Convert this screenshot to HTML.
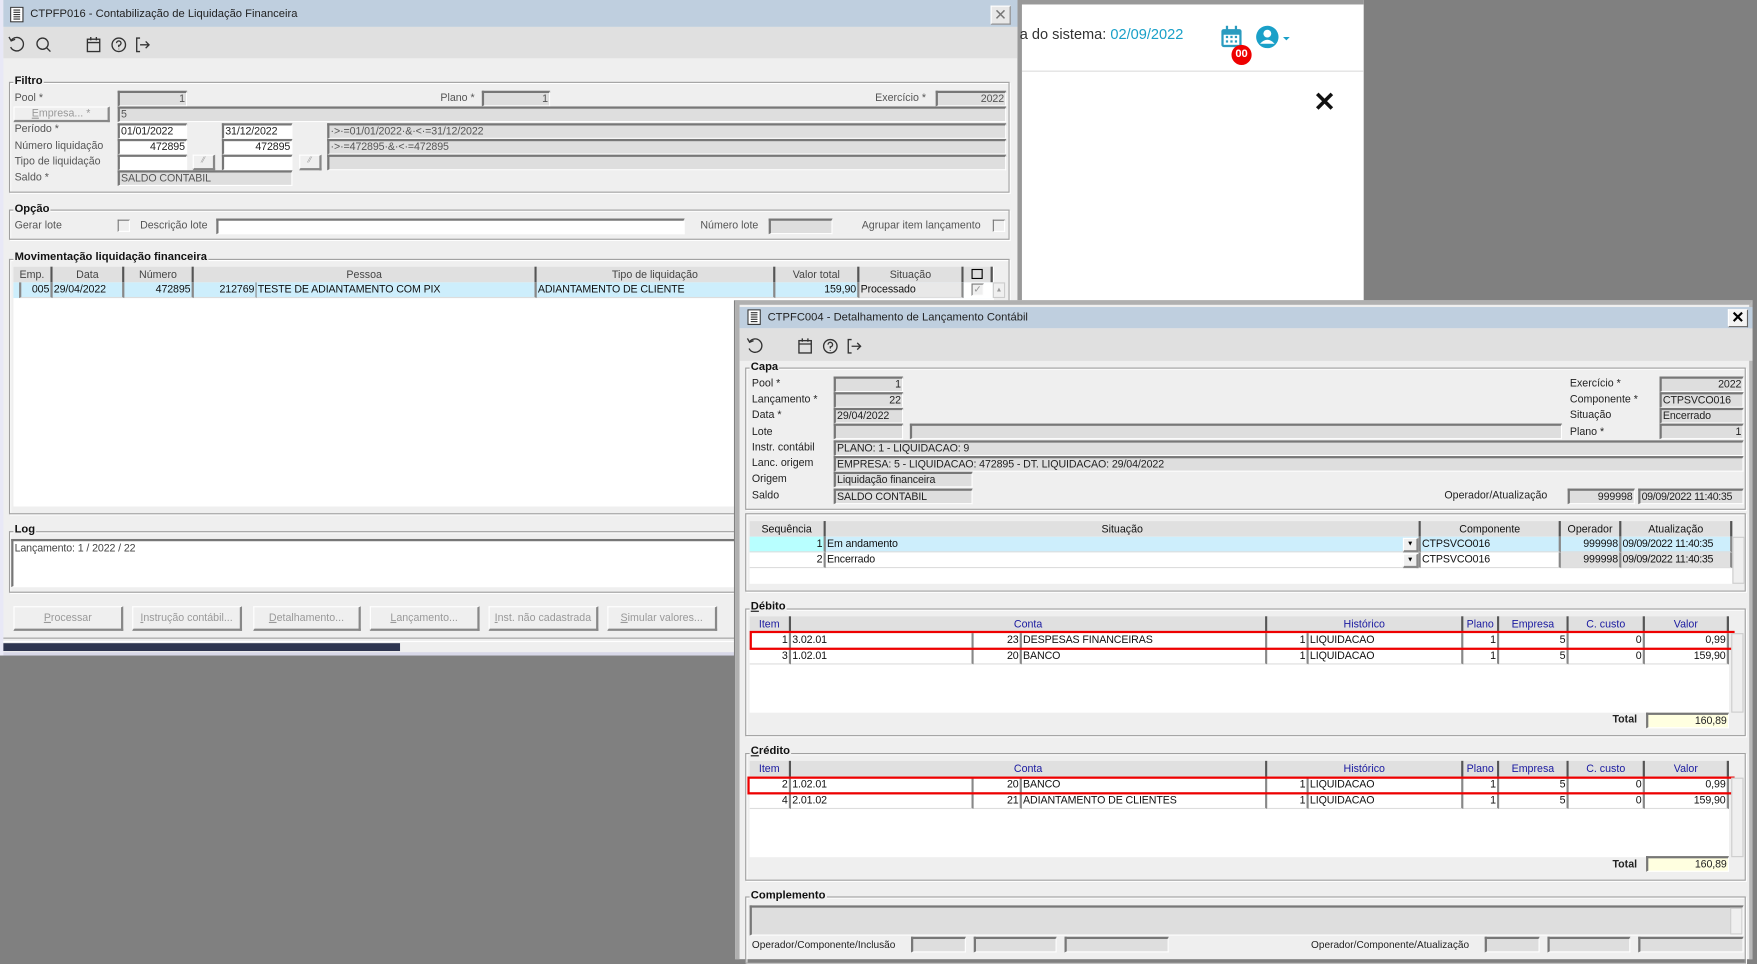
<!DOCTYPE html>
<html><head><meta charset="utf-8">
<style>
*{margin:0;padding:0;box-sizing:border-box}
html,body{width:1757px;height:959px;overflow:hidden;background:#808080;font-family:"Liberation Sans",Arial,sans-serif}
#s{position:absolute;left:0;top:0;width:1568px;height:856px;transform:scale(1.12054);transform-origin:0 0}
#s div,#s span{position:absolute}
.t{font-size:9.5px;line-height:12px;color:#222;white-space:nowrap}
.g{color:#555}
.f{height:14px;background:#dedede;border-top:2px solid #777;border-left:2px solid #777;border-bottom:1px solid #fff;border-right:1px solid #fff;font-size:9.5px;line-height:11px;padding:0 1px;color:#222;white-space:nowrap;overflow:hidden;letter-spacing:-0.1px}
.w{background:#fff}
.r{text-align:right}
.fs{border:1px solid #a0a0a0;box-shadow:inset 1px 1px 0 #fff,1px 1px 0 #fff}
.lg{font-size:10px;line-height:12px;font-weight:bold;background:#efefef;padding:0 1px;color:#111}
.hd{height:14px;background:#e0e0e0;border-right:2px solid #555;font-size:9.5px;line-height:16px;text-align:center;color:#444;white-space:nowrap;overflow:hidden}
.hb{color:#1a1aa0}
.c{height:14px;background:#fff;border-right:2px solid #888;border-bottom:1px solid #ddd;font-size:9.5px;line-height:14px;padding:0 1px;color:#111;white-space:nowrap;overflow:hidden;letter-spacing:-0.1px}
.bt{height:22px;background:#efefef;border:1px solid #fff;border-right:2px solid #888;border-bottom:2px solid #888;font-size:9.5px;line-height:19px;text-align:center;color:#999}
.cb{width:11px;height:11px;background:#efefef;border-top:1px solid #777;border-left:1px solid #777;border-right:1px solid #fff;border-bottom:1px solid #fff}
.sb{width:11px;background:#efefef;border:1px solid #ccc}
</style></head><body>
<div id="s">
<!-- web page behind -->
<div style="left:908px;top:0;width:309px;height:268px;background:#fff;border-left:4px solid #999;border-top:4px solid #999"></div>
<div class="t" style="left:910px;top:23px;font-size:13px;line-height:16px;color:#333">a do sistema: <span style="position:static;color:#1aa0c8">02/09/2022</span></div>
<svg style="position:absolute;left:1088px;top:22px" width="22" height="22" viewBox="0 0 22 22"><rect x="2" y="4" width="18" height="16" rx="2" fill="#2a9bbf"/><rect x="4" y="9" width="14" height="9" fill="#fff"/><rect x="6" y="1" width="2" height="5" fill="#2a9bbf"/><rect x="14" y="1" width="2" height="5" fill="#2a9bbf"/><g fill="#2a9bbf"><rect x="6" y="10" width="2" height="2"/><rect x="10" y="10" width="2" height="2"/><rect x="14" y="10" width="2" height="2"/><rect x="6" y="14" width="2" height="2"/><rect x="10" y="14" width="2" height="2"/><rect x="14" y="14" width="2" height="2"/></g></svg>
<div style="left:1099px;top:40px;width:18px;height:18px;border-radius:50%;background:#e00;color:#fff;font-size:10px;line-height:18px;text-align:center;font-weight:bold">00</div>
<svg style="position:absolute;left:1120px;top:22px" width="36" height="24" viewBox="0 0 36 24"><circle cx="11" cy="11" r="10" fill="#1aa0c8"/><circle cx="11" cy="8" r="3.5" fill="#fff"/><path d="M4.5 17 Q11 10 17.5 17 Z" fill="#fff"/><path d="M25 11 L31 11 L28 14 Z" fill="#1aa0c8"/></svg>
<div style="left:912px;top:63px;width:305px;height:1px;background:#ddd"></div>
<div class="t" style="left:1172px;top:78px;font-size:24px;line-height:28px;font-weight:bold;color:#111">✕</div>

<!-- LEFT WINDOW -->
<div style="left:0;top:0;width:908px;height:585px;background:#efefef;border-left:3px solid #e8e8f6"></div>
<div style="left:3px;top:0;width:905px;height:24px;background:#bfcfdf"></div>
<svg style="position:absolute;left:9px;top:6px" width="12" height="14" viewBox="0 0 12 14"><rect x="0.5" y="0.5" width="11" height="13" fill="#fff" stroke="#333"/><path d="M3 3h6M3 5h6M3 7h6M3 9h6M3 11h6" stroke="#333"/></svg>
<div class="t" style="left:27px;top:7px;font-size:10px">CTPFP016 - Contabilização de Liquidação Financeira</div>
<div style="left:884px;top:5px;width:18px;height:17px;background:#e8e8e8;border:1px solid #fff;border-right:1px solid #888;border-bottom:1px solid #888;font-size:14px;line-height:14px;text-align:center;color:#777">✕</div>
<div style="left:3px;top:24px;width:905px;height:28px;background:#e0e0e0"></div>
<svg style="position:absolute;left:7px;top:32px" width="140" height="16" viewBox="0 0 140 16" fill="none" stroke="#333" stroke-width="1.2"><path d="M3 4 A6 6 0 1 1 2.5 10"/><path d="M1 1 L3 4.5 L6.5 3"/><circle cx="31" cy="7" r="5"/><path d="M34.5 10.5 L38 14"/><rect x="71" y="3" width="11" height="11"/><path d="M71 6h11M74 1v3M79 1v3"/><circle cx="99" cy="8" r="6"/><path d="M97 6.5 A2 2 0 1 1 99 8.5 V10M99 11.5v.5"/><path d="M118 2h-3v12h3M118 8h8M123 5l3 3-3 3"/></svg>

<!-- Filtro -->
<div class="fs" style="left:8px;top:73px;width:893px;height:99px"></div>
<div class="lg" style="left:12px;top:67px">Filtro</div>
<div class="t g" style="left:13px;top:82px">Pool *</div>
<div class="f r" style="left:105px;top:81px;width:62px;color:#555">1</div>
<div class="t g" style="left:393px;top:82px">Plano *</div>
<div class="f r" style="left:430px;top:81px;width:61px;color:#555">1</div>
<div class="t g" style="left:781px;top:82px">Exercício *</div>
<div class="f r" style="left:835px;top:81px;width:63px;color:#555">2022</div>
<div class="bt" style="left:12px;top:95px;width:86px;height:14px;line-height:11px;color:#999"><u>E</u>mpresa... *</div>
<div class="f" style="left:105px;top:95px;width:793px;color:#555">5</div>
<div class="t g" style="left:13px;top:110px">Período *</div>
<div class="f w" style="left:105px;top:110px;width:62px">01/01/2022</div>
<div class="f w" style="left:198px;top:110px;width:63px">31/12/2022</div>
<div class="f" style="left:292px;top:110px;width:606px;color:#555">·&gt;·=01/01/2022·&amp;·&lt;·=31/12/2022</div>
<div class="t g" style="left:13px;top:125px">Número liquidação</div>
<div class="f w r" style="left:105px;top:124px;width:62px">472895</div>
<div class="f w r" style="left:198px;top:124px;width:63px">472895</div>
<div class="f" style="left:292px;top:124px;width:606px;color:#555">·&gt;·=472895·&amp;·&lt;·=472895</div>
<div class="t g" style="left:13px;top:139px">Tipo de liquidação</div>
<div class="f w" style="left:105px;top:138px;width:62px"></div>
<div class="bt" style="left:172px;top:138px;width:20px;height:14px;line-height:10px;font-size:7px">⁄⁄</div>
<div class="f w" style="left:198px;top:138px;width:63px"></div>
<div class="bt" style="left:267px;top:138px;width:20px;height:14px;line-height:10px;font-size:7px">⁄⁄</div>
<div class="f" style="left:292px;top:138px;width:606px"></div>
<div class="t g" style="left:13px;top:153px">Saldo *</div>
<div class="f" style="left:105px;top:152px;width:156px;color:#555">SALDO CONTABIL</div>

<!-- Opção -->
<div class="fs" style="left:8px;top:187px;width:893px;height:27px"></div>
<div class="lg" style="left:12px;top:181px">Opção</div>
<div class="t g" style="left:13px;top:196px">Gerar lote</div>
<div class="cb" style="left:105px;top:196px"></div>
<div class="t g" style="left:125px;top:196px">Descrição lote</div>
<div class="f w" style="left:193px;top:195px;width:418px"></div>
<div class="t g" style="left:625px;top:196px">Número lote</div>
<div class="f" style="left:686px;top:195px;width:57px"></div>
<div class="t g" style="left:769px;top:196px">Agrupar item lançamento</div>
<div class="cb" style="left:886px;top:196px"></div>

<!-- Movimentação -->
<div class="fs" style="left:8px;top:231px;width:893px;height:228px"></div>
<div class="lg" style="left:12px;top:224px">Movimentação liquidação financeira</div>
<div style="left:12px;top:238px;width:875px;height:214px;background:#fff"></div>
<div class="hd" style="left:12px;top:238px;width:35px">Emp.</div>
<div class="hd" style="left:47px;top:238px;width:64px">Data</div>
<div class="hd" style="left:111px;top:238px;width:62px">Número</div>
<div class="hd" style="left:173px;top:238px;width:306px">Pessoa</div>
<div class="hd" style="left:479px;top:238px;width:213px">Tipo de liquidação</div>
<div class="hd" style="left:692px;top:238px;width:75px">Valor total</div>
<div class="hd" style="left:767px;top:238px;width:93px">Situação</div>
<div class="hd" style="left:860px;top:238px;width:26px"><span style="position:relative;display:inline-block;width:10px;height:9px;border:1px solid #000;background:#ddd;top:1px"></span></div>
<div style="left:12px;top:252px;width:874px;height:14px;background:#cdeefc"></div>
<div class="c r" style="left:17px;top:252px;width:30px;background:transparent;border-left:2px solid #888">005</div>
<div class="c" style="left:47px;top:252px;width:64px;background:transparent">29/04/2022</div>
<div class="c r" style="left:111px;top:252px;width:62px;background:transparent">472895</div>
<div class="c r" style="left:173px;top:252px;width:56px;background:transparent;border-right:1px solid #888">212769</div>
<div class="c" style="left:229px;top:252px;width:250px;background:transparent">TESTE DE ADIANTAMENTO COM PIX</div>
<div class="c" style="left:479px;top:252px;width:213px;background:transparent">ADIANTAMENTO DE CLIENTE</div>
<div class="c r" style="left:692px;top:252px;width:75px;background:transparent">159,90</div>
<div class="c" style="left:767px;top:252px;width:93px;background:#e8e8e8">Processado</div>
<div style="left:860px;top:252px;width:26px;height:14px;background:#fff"></div>
<div class="cb" style="left:867px;top:253px;font-size:9px;line-height:9px;color:#999;text-align:center">✓</div>
<div class="sb" style="left:886px;top:252px;height:14px;font-size:6px;text-align:center;color:#999;line-height:12px">▲</div>

<!-- Log -->
<div class="fs" style="left:8px;top:474px;width:893px;height:55px"></div>
<div class="lg" style="left:12px;top:467px">Log</div>
<div class="f w" style="left:10px;top:481px;width:648px;height:43px;line-height:13px;color:#444">Lançamento: 1 / 2022 / 22</div>

<!-- buttons -->
<div class="bt" style="left:12px;top:541px;width:98px"><u>P</u>rocessar</div>
<div class="bt" style="left:118px;top:541px;width:98px"><u>I</u>nstrução contábil...</div>
<div class="bt" style="left:226px;top:541px;width:96px"><u>D</u>etalhamento...</div>
<div class="bt" style="left:330px;top:541px;width:98px"><u>L</u>ançamento...</div>
<div class="bt" style="left:436px;top:541px;width:98px"><u>I</u>nst. não cadastrada</div>
<div class="bt" style="left:542px;top:541px;width:98px"><u>S</u>imular valores...</div>
<div style="left:3px;top:569px;width:905px;height:1px;background:#a0a0a0"></div>
<div style="left:3px;top:572px;width:905px;height:1px;background:#fff"></div>
<div style="left:3px;top:574px;width:354px;height:7px;background:#2e3550"></div>
<div style="left:3px;top:582px;width:905px;height:3px;background:#d8d8e8"></div>

<!-- RIGHT WINDOW -->
<div style="left:655px;top:268px;width:913px;height:588px;background:#808080"></div>
<div style="left:656px;top:268px;width:908px;height:588px;background:#efefef;border:4px solid #b0b0b0;border-bottom:none;border-right:3px solid #b8b8b8"></div>
<div style="left:660px;top:274px;width:904px;height:19px;background:#bfcfdf"></div>
<svg style="position:absolute;left:667px;top:276px" width="12" height="14" viewBox="0 0 12 14"><rect x="0.5" y="0.5" width="11" height="13" fill="#fff" stroke="#333"/><path d="M3 3h6M3 5h6M3 7h6M3 9h6M3 11h6" stroke="#333"/></svg>
<div class="t" style="left:685px;top:278px;font-size:10px">CTPFC004 - Detalhamento de Lançamento Contábil</div>
<div style="left:1542px;top:276px;width:18px;height:16px;background:#f4f4f4;border:1px solid #fff;border-right:1px solid #666;border-bottom:1px solid #666;font-size:14px;line-height:13px;text-align:center;font-weight:bold;color:#000">✕</div>
<div style="left:660px;top:293px;width:904px;height:29px;background:#e0e0e0"></div>
<svg style="position:absolute;left:666px;top:301px" width="110" height="16" viewBox="0 0 110 16" fill="none" stroke="#333" stroke-width="1.2"><path d="M3 4 A6 6 0 1 1 2.5 10"/><path d="M1 1 L3 4.5 L6.5 3"/><rect x="47" y="3" width="11" height="11"/><path d="M47 6h11M50 1v3M55 1v3"/><circle cx="75" cy="8" r="6"/><path d="M73 6.5 A2 2 0 1 1 75 8.5 V10M75 11.5v.5"/><path d="M94 2h-3v12h3M94 8h8M99 5l3 3-3 3"/></svg>

<!-- Capa -->
<div class="fs" style="left:665px;top:328px;width:893px;height:127px"></div>
<div class="lg" style="left:669px;top:322px">Capa</div>
<div class="t" style="left:671px;top:337px">Pool *</div>
<div class="f r" style="left:744px;top:336px;width:62px">1</div>
<div class="t" style="left:671px;top:351px">Lançamento *</div>
<div class="f r" style="left:744px;top:350px;width:62px">22</div>
<div class="t" style="left:671px;top:365px">Data *</div>
<div class="f" style="left:744px;top:364px;width:62px">29/04/2022</div>
<div class="t" style="left:671px;top:380px">Lote</div>
<div class="f" style="left:744px;top:378px;width:62px"></div>
<div class="f" style="left:812px;top:378px;width:582px"></div>
<div class="t" style="left:671px;top:394px">Instr. contábil</div>
<div class="f" style="left:744px;top:393px;width:812px">PLANO: 1 - LIQUIDACAO: 9</div>
<div class="t" style="left:671px;top:408px">Lanc. origem</div>
<div class="f" style="left:744px;top:407px;width:812px">EMPRESA: 5 - LIQUIDACAO: 472895 - DT. LIQUIDACAO: 29/04/2022</div>
<div class="t" style="left:671px;top:422px">Origem</div>
<div class="f" style="left:744px;top:421px;width:124px">Liquidação financeira</div>
<div class="t" style="left:671px;top:437px">Saldo</div>
<div class="f" style="left:744px;top:436px;width:124px">SALDO CONTABIL</div>
<div class="t" style="left:1401px;top:337px">Exercício *</div>
<div class="f r" style="left:1481px;top:336px;width:75px">2022</div>
<div class="t" style="left:1401px;top:351px">Componente *</div>
<div class="f" style="left:1481px;top:350px;width:75px">CTPSVCO016</div>
<div class="t" style="left:1401px;top:365px">Situação</div>
<div class="f" style="left:1481px;top:364px;width:75px">Encerrado</div>
<div class="t" style="left:1401px;top:380px">Plano *</div>
<div class="f r" style="left:1481px;top:378px;width:75px">1</div>
<div class="t" style="left:1289px;top:437px">Operador/Atualização</div>
<div class="f r" style="left:1399px;top:436px;width:60px">999998</div>
<div class="f" style="left:1462px;top:436px;width:94px;letter-spacing:-0.3px">09/09/2022 11:40:35</div>

<!-- Situação grid -->
<div class="fs" style="left:665px;top:458px;width:893px;height:70px"></div>
<div style="left:669px;top:465px;width:877px;height:56px;background:#fff"></div>
<div class="hd" style="left:669px;top:465px;width:68px;color:#111">Sequência</div>
<div class="hd" style="left:737px;top:465px;width:531px;color:#111">Situação</div>
<div class="hd" style="left:1268px;top:465px;width:125px;color:#111">Componente</div>
<div class="hd" style="left:1393px;top:465px;width:54px;color:#111">Operador</div>
<div class="hd" style="left:1447px;top:465px;width:99px;color:#111">Atualização</div>
<div style="left:669px;top:479px;width:877px;height:14px;background:#cdeefc"></div>
<div class="c r" style="left:669px;top:479px;width:68px;background:#b8ffff">1</div>
<div class="c" style="left:737px;top:479px;width:531px;background:transparent">Em andamento</div>
<div class="c" style="left:1268px;top:479px;width:125px;background:transparent">CTPSVCO016</div>
<div class="c r" style="left:1393px;top:479px;width:54px;background:transparent">999998</div>
<div class="c" style="left:1447px;top:479px;width:99px;background:transparent;letter-spacing:-0.3px">09/09/2022 11:40:35</div>
<div class="c r" style="left:669px;top:493px;width:68px">2</div>
<div class="c" style="left:737px;top:493px;width:531px">Encerrado</div>
<div class="c" style="left:1268px;top:493px;width:125px">CTPSVCO016</div>
<div class="c r" style="left:1393px;top:493px;width:54px;background:#e0e0e0">999998</div>
<div class="c" style="left:1447px;top:493px;width:99px;background:#e0e0e0;letter-spacing:-0.3px">09/09/2022 11:40:35</div>
<div class="bt" style="left:1252px;top:480px;width:14px;height:13px;font-size:6px;line-height:10px;color:#000">▼</div>
<div class="bt" style="left:1252px;top:494px;width:14px;height:13px;font-size:6px;line-height:10px;color:#000">▼</div>
<div class="sb" style="left:1546px;top:479px;height:42px"></div>

<!-- Débito -->
<div class="fs" style="left:665px;top:543px;width:893px;height:114px"></div>
<div class="lg" style="left:669px;top:536px"><u>D</u>ébito</div>
<div style="left:669px;top:550px;width:874px;height:86px;background:#fff"></div>
<div class="hd hb" style="left:669px;top:550px;width:37px">Item</div>
<div class="hd hb" style="left:706px;top:550px;width:425px">Conta</div>
<div class="hd hb" style="left:1131px;top:550px;width:175px">Histórico</div>
<div class="hd hb" style="left:1306px;top:550px;width:32px">Plano</div>
<div class="hd hb" style="left:1338px;top:550px;width:62px">Empresa</div>
<div class="hd hb" style="left:1400px;top:550px;width:68px">C. custo</div>
<div class="hd hb" style="left:1468px;top:550px;width:75px">Valor</div>
<div class="c r" style="left:669px;top:565px;width:37px">1</div>
<div class="c" style="left:706px;top:565px;width:163px">3.02.01</div>
<div class="c r" style="left:869px;top:565px;width:43px">23</div>
<div class="c" style="left:912px;top:565px;width:219px">DESPESAS FINANCEIRAS</div>
<div class="c r" style="left:1131px;top:565px;width:37px">1</div>
<div class="c" style="left:1168px;top:565px;width:138px">LIQUIDACAO</div>
<div class="c r" style="left:1306px;top:565px;width:32px">1</div>
<div class="c r" style="left:1338px;top:565px;width:62px">5</div>
<div class="c r" style="left:1400px;top:565px;width:68px">0</div>
<div class="c r" style="left:1468px;top:565px;width:75px">0,99</div>
<div class="c r" style="left:669px;top:579px;width:37px">3</div>
<div class="c" style="left:706px;top:579px;width:163px">1.02.01</div>
<div class="c r" style="left:869px;top:579px;width:43px">20</div>
<div class="c" style="left:912px;top:579px;width:219px">BANCO</div>
<div class="c r" style="left:1131px;top:579px;width:37px">1</div>
<div class="c" style="left:1168px;top:579px;width:138px">LIQUIDACAO</div>
<div class="c r" style="left:1306px;top:579px;width:32px">1</div>
<div class="c r" style="left:1338px;top:579px;width:62px">5</div>
<div class="c r" style="left:1400px;top:579px;width:68px">0</div>
<div class="c r" style="left:1468px;top:579px;width:75px">159,90</div>
<div style="left:669px;top:563px;width:879px;height:17px;border:2px solid #e00"></div>
<div class="sb" style="left:1545px;top:565px;height:71px"></div>
<div class="t" style="left:1439px;top:637px;font-weight:bold">Total</div>
<div class="f r" style="left:1469px;top:636px;width:74px;background:#ffffe0">160,89</div>

<!-- Crédito -->
<div class="fs" style="left:665px;top:672px;width:893px;height:114px"></div>
<div class="lg" style="left:669px;top:665px"><u>C</u>rédito</div>
<div style="left:669px;top:679px;width:874px;height:86px;background:#fff"></div>
<div class="hd hb" style="left:669px;top:679px;width:37px">Item</div>
<div class="hd hb" style="left:706px;top:679px;width:425px">Conta</div>
<div class="hd hb" style="left:1131px;top:679px;width:175px">Histórico</div>
<div class="hd hb" style="left:1306px;top:679px;width:32px">Plano</div>
<div class="hd hb" style="left:1338px;top:679px;width:62px">Empresa</div>
<div class="hd hb" style="left:1400px;top:679px;width:68px">C. custo</div>
<div class="hd hb" style="left:1468px;top:679px;width:75px">Valor</div>
<div class="c r" style="left:669px;top:694px;width:37px">2</div>
<div class="c" style="left:706px;top:694px;width:163px">1.02.01</div>
<div class="c r" style="left:869px;top:694px;width:43px">20</div>
<div class="c" style="left:912px;top:694px;width:219px">BANCO</div>
<div class="c r" style="left:1131px;top:694px;width:37px">1</div>
<div class="c" style="left:1168px;top:694px;width:138px">LIQUIDACAO</div>
<div class="c r" style="left:1306px;top:694px;width:32px">1</div>
<div class="c r" style="left:1338px;top:694px;width:62px">5</div>
<div class="c r" style="left:1400px;top:694px;width:68px">0</div>
<div class="c r" style="left:1468px;top:694px;width:75px">0,99</div>
<div class="c r" style="left:669px;top:708px;width:37px">4</div>
<div class="c" style="left:706px;top:708px;width:163px">2.01.02</div>
<div class="c r" style="left:869px;top:708px;width:43px">21</div>
<div class="c" style="left:912px;top:708px;width:219px">ADIANTAMENTO DE CLIENTES</div>
<div class="c r" style="left:1131px;top:708px;width:37px">1</div>
<div class="c" style="left:1168px;top:708px;width:138px">LIQUIDACAO</div>
<div class="c r" style="left:1306px;top:708px;width:32px">1</div>
<div class="c r" style="left:1338px;top:708px;width:62px">5</div>
<div class="c r" style="left:1400px;top:708px;width:68px">0</div>
<div class="c r" style="left:1468px;top:708px;width:75px">159,90</div>
<div style="left:667px;top:693px;width:881px;height:16px;border:2px solid #e00"></div>
<div class="sb" style="left:1545px;top:694px;height:71px"></div>
<div class="t" style="left:1439px;top:766px;font-weight:bold">Total</div>
<div class="f r" style="left:1469px;top:764px;width:74px;background:#ffffe0">160,89</div>

<!-- Complemento -->
<div class="fs" style="left:665px;top:800px;width:893px;height:60px"></div>
<div class="lg" style="left:669px;top:794px">Complemento</div>
<div class="f" style="left:669px;top:808px;width:887px;height:27px"></div>
<div class="sb" style="left:1544px;top:810px;height:24px"></div>
<div class="t" style="left:671px;top:837px;font-size:9px">Operador/Componente/Inclusão</div>
<div class="f" style="left:813px;top:836px;width:49px"></div>
<div class="f" style="left:869px;top:836px;width:74px"></div>
<div class="f" style="left:950px;top:836px;width:93px"></div>
<div class="t" style="left:1170px;top:837px;font-size:9px">Operador/Componente/Atualização</div>
<div class="f" style="left:1325px;top:836px;width:49px"></div>
<div class="f" style="left:1381px;top:836px;width:74px"></div>
<div class="f" style="left:1462px;top:836px;width:94px"></div>
</div>
</body></html>
